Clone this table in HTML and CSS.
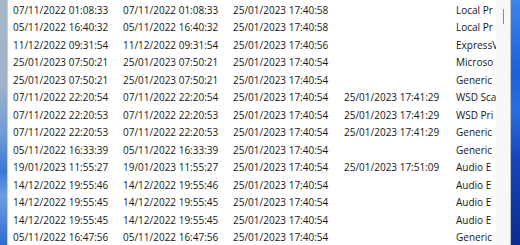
FILE: index.html
```html
<!DOCTYPE html>
<html>
<head>
<meta charset="utf-8">
<link rel="stylesheet" href="styles.css">
</head>
<body>
<div class="desk">
  <div class="wall-left"></div>
  <div class="window">
    <div class="list">
      <div class="row"><span>07/11/2022 01:08:33</span><span>07/11/2022 01:08:33</span><span>25/01/2023 17:40:58</span><span></span><span>Local Pr</span></div>
      <div class="row"><span>05/11/2022 16:40:32</span><span>05/11/2022 16:40:32</span><span>25/01/2023 17:40:58</span><span></span><span>Local Pr</span></div>
      <div class="row"><span>11/12/2022 09:31:54</span><span>11/12/2022 09:31:54</span><span>25/01/2023 17:40:56</span><span></span><span>ExpressV</span></div>
      <div class="row"><span>25/01/2023 07:50:21</span><span>25/01/2023 07:50:21</span><span>25/01/2023 17:40:54</span><span></span><span>Microso</span></div>
      <div class="row"><span>25/01/2023 07:50:21</span><span>25/01/2023 07:50:21</span><span>25/01/2023 17:40:54</span><span></span><span>Generic</span></div>
      <div class="row"><span>07/11/2022 22:20:54</span><span>07/11/2022 22:20:54</span><span>25/01/2023 17:40:54</span><span>25/01/2023 17:41:29</span><span>WSD Sca</span></div>
      <div class="row"><span>07/11/2022 22:20:53</span><span>07/11/2022 22:20:53</span><span>25/01/2023 17:40:54</span><span>25/01/2023 17:41:29</span><span>WSD Pri</span></div>
      <div class="row"><span>07/11/2022 22:20:53</span><span>07/11/2022 22:20:53</span><span>25/01/2023 17:40:54</span><span>25/01/2023 17:41:29</span><span>Generic</span></div>
      <div class="row"><span>05/11/2022 16:33:39</span><span>05/11/2022 16:33:39</span><span>25/01/2023 17:40:54</span><span></span><span>Generic</span></div>
      <div class="row"><span>19/01/2023 11:55:27</span><span>19/01/2023 11:55:27</span><span>25/01/2023 17:40:54</span><span>25/01/2023 17:51:09</span><span>Audio E</span></div>
      <div class="row"><span>14/12/2022 19:55:46</span><span>14/12/2022 19:55:46</span><span>25/01/2023 17:40:54</span><span></span><span>Audio E</span></div>
      <div class="row"><span>14/12/2022 19:55:45</span><span>14/12/2022 19:55:45</span><span>25/01/2023 17:40:54</span><span></span><span>Audio E</span></div>
      <div class="row"><span>14/12/2022 19:55:45</span><span>14/12/2022 19:55:45</span><span>25/01/2023 17:40:54</span><span></span><span>Audio E</span></div>
      <div class="row"><span>05/11/2022 16:47:56</span><span>05/11/2022 16:47:56</span><span>25/01/2023 17:40:54</span><span></span><span>Generic</span></div>
    </div>
    <div class="scrollbar"><div class="thumb"></div></div>
  </div>
  <div class="wall-right"></div>
</div>
</body>
</html>
```

FILE: styles.css
```css
html, body {
  margin: 0;
  padding: 0;
  width: 520px;
  height: 245px;
  overflow: hidden;
}
.desk {
  display: flex;
  width: 520px;
  height: 245px;
}
.wall-left {
  width: 7px;
  flex: none;
  background: linear-gradient(180deg, #a9b6c6 0%, #9fb2c9 35%, #6f9ad6 55%, #3b78da 70%, #6d9ee0 80%, #2f6bd2 100%);
}
.window {
  flex: 1;
  display: flex;
  border-left: 1px solid #c9ced6;
  border-right: 1px solid #b9c0ca;
  background: #ffffff;
}
.list {
  width: 488px;
  flex: none;
  overflow: hidden;
  padding-top: 1px;
  font-family: "Open Sans", "Noto Sans", sans-serif;
  font-size: 10px;
  color: #161616;
}
.row {
  display: grid;
  grid-template-columns: 110px 110px 111px 112px 1fr;
  height: 17.5px;
  align-items: center;
  padding-left: 5px;
  white-space: nowrap;
}
.row span {
  overflow: hidden;
}
.scrollbar {
  flex: 1;
  background: #f7f7f7;
  position: relative;
}
.thumb {
  position: absolute;
  left: 7px;
  top: 9px;
  width: 1px;
  height: 15px;
  background: #8a8a8a;
  border-radius: 1px;
}
.wall-right {
  width: 9px;
  flex: none;
  background: linear-gradient(160deg, #3e86e8 0%, #1d5fd8 30%, #2a6ee0 45%, #1546b8 65%, #0c2c8e 100%);
}
```
